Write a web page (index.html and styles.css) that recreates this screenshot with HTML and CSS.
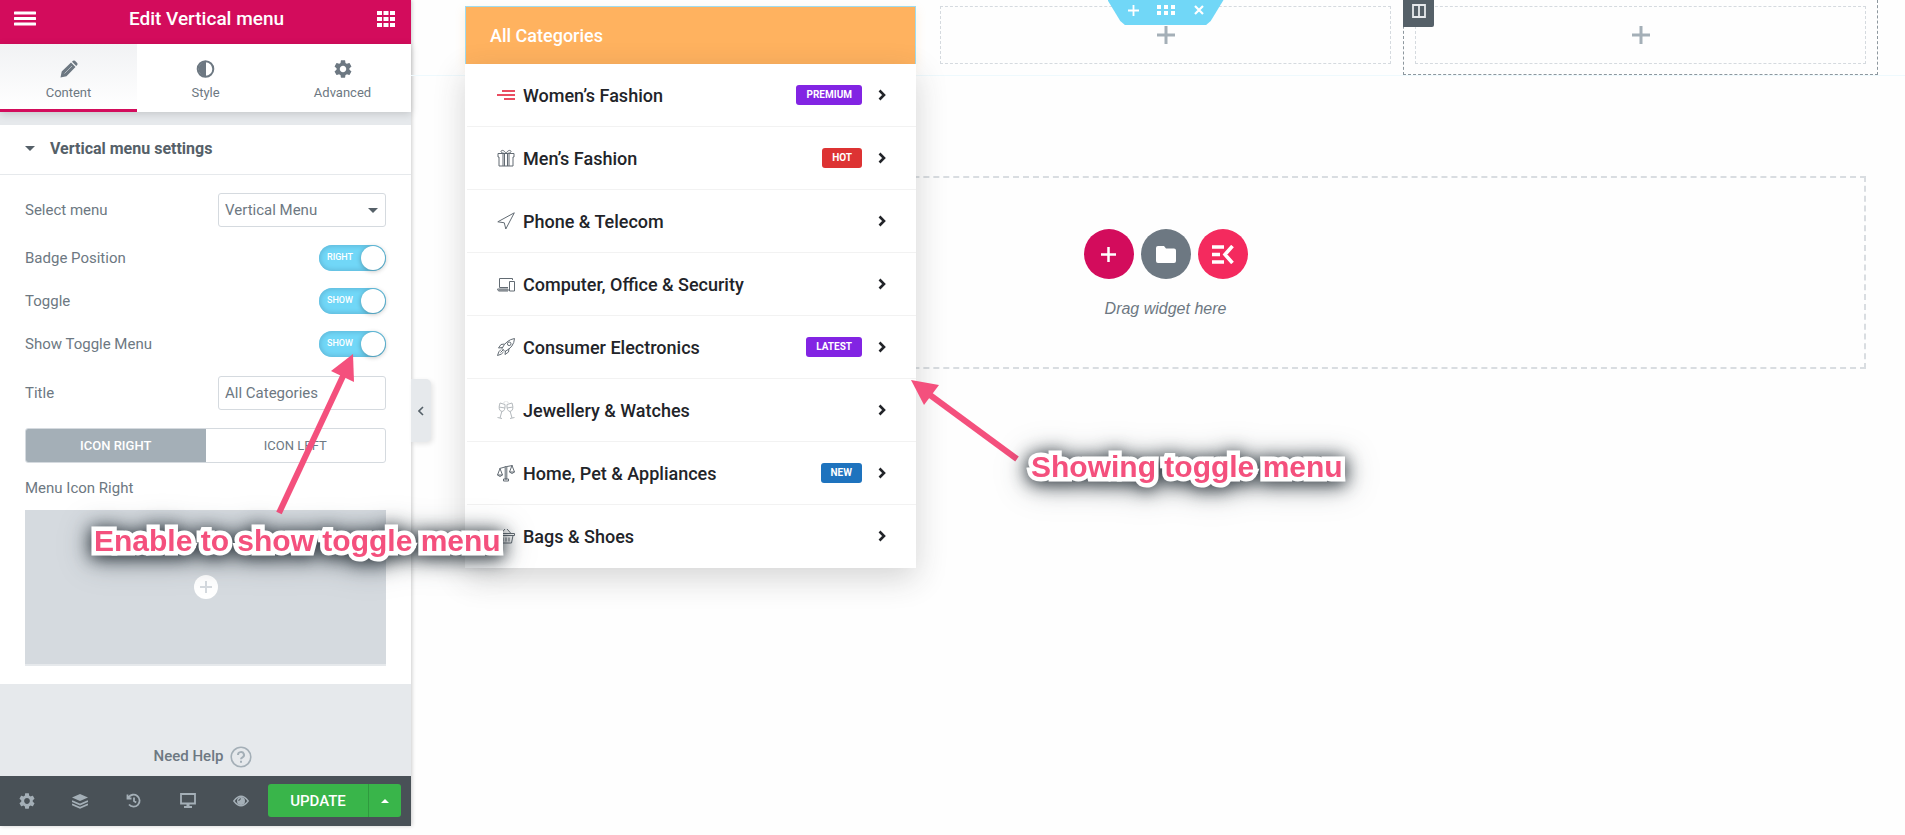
FILE: index.html
```html
<!DOCTYPE html>
<html lang="en">
<head>
    <meta charset="UTF-8">
    <meta name="viewport" content="width=device-width, initial-scale=1.0">
    <title>Edit Vertical menu</title>
    <link rel="stylesheet" href="styles.css">
</head>
<body>

<svg class="sprite" aria-hidden="true">
    <symbol id="gear" viewBox="0 0 24 24">
        <path fill-rule="evenodd" d="M19.14,12.94c0.04-0.3,0.06-0.61,0.06-0.94c0-0.32-0.02-0.64-0.07-0.94l2.03-1.58c0.18-0.14,0.23-0.41,0.12-0.61l-1.92-3.32c-0.12-0.22-0.37-0.29-0.59-0.22l-2.39,0.96c-0.5-0.38-1.03-0.7-1.62-0.94L14.4,2.81c-0.04-0.24-0.24-0.41-0.48-0.41h-3.84c-0.24,0-0.43,0.17-0.47,0.41L9.25,5.35C8.66,5.59,8.12,5.92,7.63,6.29L5.24,5.33c-0.22-0.08-0.47,0-0.59,0.22L2.74,8.87C2.62,9.08,2.66,9.34,2.86,9.48l2.03,1.58C4.84,11.36,4.8,11.69,4.8,12s0.02,0.64,0.07,0.94l-2.03,1.58c-0.18,0.14-0.23,0.41-0.12,0.61l1.92,3.32c0.12,0.22,0.37,0.29,0.59,0.22l2.39-0.96c0.5,0.38,1.03,0.7,1.62,0.94l0.36,2.54c0.05,0.24,0.24,0.41,0.48,0.41h3.84c0.24,0,0.44-0.17,0.47-0.41l0.36-2.54c0.59-0.24,1.13-0.56,1.62-0.94l2.39,0.96c0.22,0.08,0.47,0,0.59-0.22l1.92-3.32c0.12-0.22,0.07-0.47-0.12-0.61L19.14,12.94z M12,15.6c-1.98,0-3.6-1.62-3.6-3.6s1.62-3.6,3.6-3.6s3.6,1.62,3.6,3.6S13.98,15.6,12,15.6z"/>
    </symbol>
    <symbol id="chevron" viewBox="0 0 8 12">
        <path d="M1.5 1.5L6 6l-4.500 4.500" fill="none" stroke="currentColor" stroke-width="2.600"/>
    </symbol>
    <symbol id="plus" viewBox="0 0 18 18">
        <path d="M9 0v18M0 9h18" fill="none" stroke="currentColor" stroke-width="3"/>
    </symbol>
</svg>

<aside class="panel">
    <header class="panel-header">
        <button aria-label="Menu"><svg width="22" height="15" viewBox="0 0 22 15"><path d="M1 2h20M1 7.500h20M1 13h20" stroke="#fff" stroke-width="3" stroke-linecap="round"/></svg></button>
        <h1>Edit Vertical menu</h1>
        <button aria-label="Widgets"><svg width="18" height="16" viewBox="0 0 18 16" fill="#fff"><path d="M0 0h5v4H0zM6.500 0h5v4h-5zM13 0h5v4h-5zM0 6h5v4H0zM6.500 6h5v4h-5zM13 6h5v4h-5zM0 12h5v4H0zM6.500 12h5v4h-5zM13 12h5v4h-5z"/></svg></button>
    </header>

    <nav class="tabs">
        <a href="#content" class="active">
            <svg width="18" height="18" viewBox="0 0 18 18" fill="currentColor"><path d="M.5 17.500l1.200-6L11 2.500l4.500 4.500L6.500 16.300zM12 1.800l1-1q1-.8 2 0l2.200 2.200q.8 1 0 2l-1 1z"/><path d="M4.500 13.500L12 6" stroke="#c5cacf" stroke-width=".8"/></svg>
            Content
        </a>
        <a href="#style">
            <svg width="19" height="18" viewBox="0 0 19 18"><circle cx="9.500" cy="9" r="7.800" fill="none" stroke="currentColor" stroke-width="2"/><path d="M10 1.500v15a7.500 7.500 0 0 1 0-15z" fill="currentColor"/></svg>
            Style
        </a>
        <a href="#advanced">
            <svg width="20" height="18" viewBox="2 2 20 20" fill="currentColor"><use href="#gear" width="24" height="24"/></svg>
            Advanced
        </a>
    </nav>

    <section class="settings">
        <h2><span class="caret"></span>Vertical menu settings</h2>
        <div class="controls">
            <div class="control">
                <label for="menu">Select menu</label>
                <div class="select-wrap">
                    <select id="menu"><option>Vertical Menu</option></select>
                    <span class="caret"></span>
                </div>
            </div>
            <div class="control toggle">
                <label for="badge-position">Badge Position</label>
                <div class="switch"><input type="checkbox" id="badge-position" checked><span>RIGHT</span></div>
            </div>
            <div class="control toggle">
                <label for="toggle">Toggle</label>
                <div class="switch"><input type="checkbox" id="toggle" checked><span>SHOW</span></div>
            </div>
            <div class="control toggle">
                <label for="show-toggle">Show Toggle Menu</label>
                <div class="switch"><input type="checkbox" id="show-toggle" checked><span>SHOW</span></div>
            </div>
            <div class="control">
                <label for="title">Title</label>
                <input type="text" id="title" value="All Categories">
            </div>
            <div class="choices">
                <button class="active">ICON RIGHT</button>
                <button>ICON LEFT</button>
            </div>
            <div class="media-label">Menu Icon Right</div>
            <button class="media" aria-label="Choose icon">
                <svg width="24" height="24" viewBox="0 0 24 24"><circle cx="12" cy="12" r="12" fill="#fff"/><path d="M12 6v12M6 12h12" stroke="#d5dadf" stroke-width="2"/></svg>
            </button>
        </div>
    </section>

    <a href="#help" class="help">Need Help
        <svg width="22" height="22" viewBox="0 0 22 22" fill="none" stroke="#a4afb7"><circle cx="11" cy="11" r="9.800" stroke-width="1.600"/><path d="M8 9a3 2.800 0 1 1 4.500 2.300Q11 12.200 11 13.300M11 14.800v2" stroke-width="2"/></svg>
    </a>

    <footer class="panel-footer">
        <button class="tool" aria-label="Settings"><svg width="16" height="16" viewBox="2 2 20 20" fill="currentColor"><use href="#gear" width="24" height="24"/></svg></button>
        <button class="tool" aria-label="Navigator"><svg width="16" height="16" viewBox="0 0 16 16" fill="currentColor"><path d="M8 1l8 3.500L8 8 0 4.500z"/><path d="M0 8l8 3.500L16 8M0 11.300l8 3.500 8-3.500" fill="none" stroke="currentColor" stroke-width="1.700"/></svg></button>
        <button class="tool" aria-label="History"><svg width="15" height="15" viewBox="0 0 15 15" fill="none" stroke="currentColor" stroke-width="1.800"><path d="M2.500 4.500A6 6 0 1 1 3 11.500M1.500 1.500v4h4M8 4.500v3.500l2.200 1.500"/></svg></button>
        <button class="tool" aria-label="Responsive mode"><svg width="16" height="15" viewBox="0 0 16 15"><path d="M1 1h14v9.500H1z" fill="none" stroke="currentColor" stroke-width="1.800"/><path d="M6.500 11h3v2H12v2H4v-2h2.500z" fill="currentColor"/></svg></button>
        <button class="tool" aria-label="Preview"><svg width="16" height="12" viewBox="0 0 16 12"><path d="M.8 6Q8-3.500 15.200 6 8 15.500.8 6z" fill="none" stroke="currentColor" stroke-width="1.400"/><circle cx="8" cy="6" r="4" fill="currentColor"/><path d="M5.800 6A2.200 2.200 0 0 1 8 3.800" fill="none" stroke="#495157"/></svg></button>
        <button class="update">UPDATE</button>
        <button class="update-more" aria-label="Save options"><span class="caret up"></span></button>
    </footer>

    <button class="collapse" aria-label="Hide panel"><svg width="6" height="10" viewBox="0 0 6 10"><path d="M5 1L1 5l4 4" fill="none" stroke="#556068" stroke-width="1.600"/></svg></button>
</aside>

<main class="canvas">
    <div class="section">
        <div class="section-tools">
            <button aria-label="Add section"><svg width="11" height="11"><use href="#plus"/></svg></button>
            <button aria-label="Edit section"><svg width="18" height="10" viewBox="0 0 18 10" fill="#fff"><path d="M0 0h4v4H0zM7 0h4v4H7zM14 0h4v4h-4zM0 6h4v4H0zM7 6h4v4H7zM14 6h4v4h-4z"/></svg></button>
            <button aria-label="Delete section"><svg width="10" height="10" viewBox="0 0 10 10"><path d="M1 1l8 8M9 1L1 9" stroke="#fff" stroke-width="2.200"/></svg></button>
        </div>

        <div class="column">
            <div class="menu">
                <button class="menu-title">All Categories</button>
                <ul class="menu-list">
                    <li><a href="#">
                        <svg class="icon" viewBox="0 0 18 18"><path d="M5 5h13M0 9h18M7 13h11" stroke="#ea4d61" stroke-width="1.800"/></svg>
                        <span class="name">Women’s Fashion</span><span class="badge purple">PREMIUM</span>
                        <svg class="arrow"><use href="#chevron"/></svg>
                    </a></li>
                    <li><a href="#">
                        <svg class="icon" viewBox="0 0 18 18"><path d="M1 4.500h16V8h-1v9H2V8H1zM6 5v12M7.500 5v12M10.500 5v12M12 5v12M9 4.500C7 4.500 4 4 4 2.500S7 .5 9 4.500c2-4 5-3.500 5-2S11 4.500 9 4.500"/></svg>
                        <span class="name">Men’s Fashion</span><span class="badge red">HOT</span>
                        <svg class="arrow"><use href="#chevron"/></svg>
                    </a></li>
                    <li><a href="#">
                        <svg class="icon" viewBox="0 0 18 18"><path d="M17.300.8L.8 9.800l6.500 1L8.800 17z"/></svg>
                        <span class="name">Phone &amp; Telecom</span>
                        <svg class="arrow"><use href="#chevron"/></svg>
                    </a></li>
                    <li><a href="#">
                        <svg class="icon" viewBox="0 0 18 18"><path d="M2.500 12.500V3.500h13V5M2.500 12.500H11M.5 14H11v2H1.500zM12.500 6.500h5v9.500h-5zM2 15h8"/></svg>
                        <span class="name">Computer, Office &amp; Security</span>
                        <svg class="arrow"><use href="#chevron"/></svg>
                    </a></li>
                    <li><a href="#">
                        <svg class="icon" viewBox="0 0 18 18"><path d="M5 10.500Q9 2 17.500.5 17 9 8 13.500zM7.500 6L4 6.500 1.500 10l4-.5M12 10.500l-.5 3.500L8 16.500l.5-3.500M4 11.500Q1.500 13 .5 17.500 5 16.500 6.500 14M3.500 14.500l3-3"/><circle cx="12.200" cy="5.800" r="1.800"/></svg>
                        <span class="name">Consumer Electronics</span><span class="badge purple">LATEST</span>
                        <svg class="arrow"><use href="#chevron"/></svg>
                    </a></li>
                    <li><a href="#">
                        <svg class="icon light" viewBox="0 0 18 18"><path d="M3 2l5 1.500q.5 6.500-3 7Q.5 9.500 3 2zM15 2l-5 1.500q-.5 6.500 3 7Q17.500 9.500 15 2zM4.800 10.500L3 17M.5 16.500l4.500 1M13.200 10.500L15 17M17.500 16.500l-4.500 1M2 6l6 1M16 6l-6 1M7 1.500l1-1M11 1.500l-1-1"/></svg>
                        <span class="name">Jewellery &amp; Watches</span>
                        <svg class="arrow"><use href="#chevron"/></svg>
                    </a></li>
                    <li><a href="#">
                        <svg class="icon" viewBox="0 0 18 18"><path d="M8.200 2.500h1.600V15H8.200zM6.500 15h5v2h-5zM2.500 4.500L8 3M10 2.500l5.500-1M3 4.500L.5 11h5zM15 1.500L12.500 8h5zM.5 11q2.500 3 5 0M12.500 8q2.500 3 5 0"/></svg>
                        <span class="name">Home, Pet &amp; Appliances</span><span class="badge blue">NEW</span>
                        <svg class="arrow"><use href="#chevron"/></svg>
                    </a></li>
                    <li><a href="#">
                        <svg class="icon" viewBox="0 0 18 18"><path d="M.5 6.500h17v2H.5zM2 8.500h14L14.500 16h-11zM4 6.500L8 2M14 6.500L10 2M6 10.500v4M9 10.500v4M12 10.500v4"/></svg>
                        <span class="name">Bags &amp; Shoes</span>
                        <svg class="arrow"><use href="#chevron"/></svg>
                    </a></li>
                </ul>
            </div>
        </div>
        <div class="column">
            <button class="empty" aria-label="Add widget"><svg width="18" height="18"><use href="#plus"/></svg></button>
        </div>
        <div class="column selected">
            <button class="column-handle" aria-label="Edit column"><svg width="14" height="14" viewBox="0 0 14 14"><path d="M1 1h12v12H1zM7 1v12" fill="none" stroke="#e6e9ec" stroke-width="1.800"/></svg></button>
            <button class="empty" aria-label="Add widget"><svg width="18" height="18"><use href="#plus"/></svg></button>
        </div>
    </div>

    <div class="drop-area">
        <div class="drop-buttons">
            <button class="add" aria-label="Add new section"><svg width="15" height="15"><use href="#plus"/></svg></button>
            <button class="folder" aria-label="Add template"><svg width="20" height="17" viewBox="0 0 20 17"><path d="M2 0h6l2 2.500h8q2 0 2 2V15q0 2-2 2H2q-2 0-2-2V2q0-2 2-2z" fill="#fff"/></svg></button>
            <button class="kit" aria-label="ElementsKit"><svg width="22" height="19" viewBox="0 0 22 19"><path d="M0 2h12M0 9.500h8M0 17h12M20.500 1L13 9.500l7.500 8.500" fill="none" stroke="#fff" stroke-width="3.600"/></svg></button>
        </div>
        <p>Drag widget here</p>
    </div>
</main>

<svg class="arrows" width="1030" height="520" viewBox="0 0 1030 520" fill="#f4507d" stroke="#f4507d" aria-hidden="true">
    <path d="M279 513L344 374" stroke-width="6"/>
    <path d="M353 354l1 28-23-11z" stroke="none"/>
    <path d="M1017 459L930 395" stroke-width="6"/>
    <path d="M911 380l28 5-15 20z" stroke="none"/>
</svg>
<div class="note note-enable">Enable to show toggle menu</div>
<div class="note note-showing">Showing toggle menu</div>

</body>
</html>
```
FILE: styles.css
```css
* {
    box-sizing: border-box;
}
body {
    font-family: Roboto, sans-serif;
    margin: 0;
    padding-bottom: 9px;
    min-height: 100vh;
    display: flex;
    position: relative;
    background-color: #fefefe;
    color: #6d7882;
    overflow-x: hidden;
}
button {
    font-family: inherit;
    color: inherit;
    padding: 0;
    border: none;
    background: none;
    cursor: pointer;
    display: flex;
    align-items: center;
    justify-content: center;
}
a {
    color: inherit;
    text-decoration: none;
}
svg {
    display: block;
    flex: none;
}
.sprite {
    position: absolute;
    width: 0;
    height: 0;
}

/* Left panel */
.panel {
    width: 411px;
    flex: none;
    position: relative;
    display: flex;
    flex-direction: column;
    background-color: #e6e9ec;
    box-shadow: 1px 0 4px rgba(0, 0, 0, 0.2);
}
.panel-header {
    height: 44px;
    padding: 0 16px 7px 14px;
    display: flex;
    align-items: center;
    justify-content: space-between;
    background-color: #d30c5c;
}
.panel-header h1 {
    margin: 0;
    font-size: 19px;
    line-height: 22px;
    font-weight: 500;
    color: #fff;
}
.tabs {
    display: flex;
    height: 68px;
    background-color: #fff;
    box-shadow: 0 2px 8px rgba(0, 0, 0, 0.15);
}
.tabs a {
    flex: 1;
    display: flex;
    flex-direction: column;
    align-items: center;
    gap: 6px;
    padding-top: 16px;
    font-size: 13px;
    line-height: 18px;
    border-bottom: 3px solid transparent;
}
.tabs a.active {
    background: linear-gradient(#f1f2f4, #fff);
    border-bottom-color: #d30c5c;
}
.settings {
    margin-top: 13px;
    background-color: #fff;
}
.settings h2 {
    margin: 0;
    height: 50px;
    padding: 0 25px 2px;
    display: flex;
    align-items: center;
    gap: 15px;
    font-size: 16px;
    font-weight: 700;
    color: #556068;
    border-bottom: 1px solid #e6e9ec;
}
.caret {
    border: 5px solid transparent;
    border-top-color: #556068;
    border-bottom: none;
}
.caret.up {
    border: 4px solid transparent;
    border-bottom-color: #fff;
    border-top: none;
}
.controls {
    padding: 17px 25px 18px;
    font-size: 15px;
}
.control {
    display: flex;
    align-items: center;
    justify-content: space-between;
    height: 35px;
    margin-bottom: 18px;
}
.control.toggle {
    height: 26px;
}
.control.toggle + .control.toggle {
    margin-top: -1px;
}
.control select,
.control input[type="text"] {
    width: 168px;
    height: 34px;
    padding: 0 6px;
    border: 1px solid #d5dadf;
    border-radius: 3px;
    background-color: #fff;
    font: inherit;
    color: inherit;
    appearance: none;
}
.select-wrap,
.switch {
    position: relative;
}
.select-wrap .caret {
    position: absolute;
    right: 8px;
    top: 15px;
}
.switch input {
    display: block;
    width: 67px;
    height: 26px;
    margin: 0;
    appearance: none;
    border-radius: 13px;
    background-color: #71d7f7;
    box-shadow: inset 0 0 5px 1px #5fb5d6;
}
.switch input::before {
    content: "";
    display: block;
    width: 24px;
    height: 24px;
    margin: 1px 1px 1px 42px;
    border-radius: 50%;
    background-color: #fff;
    box-shadow: 0 1px 5px rgba(0, 0, 0, 0.3);
}
.switch span {
    position: absolute;
    left: 8px;
    top: 6px;
    font-size: 9px;
    line-height: 12px;
    font-weight: 500;
    color: #fff;
    pointer-events: none;
}
.choices {
    display: flex;
    height: 35px;
    border: 1px solid #d5dadf;
    border-radius: 3px;
    overflow: hidden;
}
.choices button {
    flex: 1;
    font-size: 13px;
}
.choices .active {
    background-color: #a4afb7;
    color: #fff;
    font-weight: 500;
}
.media-label {
    margin: 16px 0 12px;
    line-height: 19px;
}
.media {
    width: 100%;
    height: 156px;
    background-color: #d5dadf;
    border-bottom: 2px solid #e6e9ec;
}
.help {
    margin-top: auto;
    height: 30px;
    padding-right: 5px;
    display: flex;
    justify-content: center;
    gap: 7px;
    font-size: 15px;
    line-height: 20px;
    font-weight: 500;
}
.panel-footer {
    height: 50px;
    padding: 0 10px 1px 0;
    display: flex;
    align-items: center;
    background-color: #495157;
}
.panel-footer .tool {
    flex: 1;
    height: 48px;
    color: #a4afb7;
}
.update,
.update-more {
    height: 33px;
    background-color: #39b54a;
    color: #fff;
    font-size: 15px;
    font-weight: 500;
}
.update {
    width: 101px;
    border-radius: 3px 0 0 3px;
    border-right: 1px solid #2f9a3e;
}
.update-more {
    width: 32px;
    border-radius: 0 3px 3px 0;
}
.collapse {
    position: absolute;
    left: 100%;
    top: 379px;
    width: 20px;
    height: 63px;
    background-color: #e6e9ec;
    border-radius: 0 5px 5px 0;
    box-shadow: 2px 2px 5px rgba(0, 0, 0, 0.1);
}

/* Page canvas */
.canvas {
    flex: 1;
    min-width: 0;
}
.section {
    position: relative;
    display: flex;
    height: 76px;
    padding: 0 27px 0 42px;
    border-bottom: 1px solid #eef9fd;
}
.section-tools {
    position: absolute;
    z-index: 1;
    top: 0;
    left: 42px;
    right: 27px;
    width: 116px;
    height: 25px;
    margin: 0 auto;
    padding: 0 20px 5px;
    display: flex;
    align-items: center;
    justify-content: space-between;
    background-color: #71d7f7;
    clip-path: polygon(0 0, 100% 0, 89% 84%, 85% 100%, 15% 100%, 11% 84%);
    color: #fff;
}
.column {
    flex: 1;
    min-width: 0;
    position: relative;
    padding: 6px 12px 12px;
}
.column.selected {
    border: 1px dashed #8d979e;
    border-top: none;
    padding: 6px 11px 11px;
}
.column-handle {
    position: absolute;
    top: 0;
    left: -1px;
    width: 31px;
    height: 27px;
    padding-bottom: 6px;
    border-radius: 0 0 2px 0;
    background-color: #556068;
}
.empty {
    width: 100%;
    height: 58px;
    border: 1px dashed #d5dadf;
    color: #a4afb7;
}
.drop-area {
    margin: 100px 39px 0 54px;
    height: 193px;
    display: flex;
    flex-direction: column;
    align-items: center;
    border: 2px dashed #d9dde1;
}
.drop-buttons {
    display: flex;
    gap: 7px;
    margin-top: 51px;
}
.drop-buttons button {
    width: 50px;
    height: 50px;
    border-radius: 50%;
    color: #fff;
}
.drop-buttons .add {
    background-color: #d30c5c;
}
.drop-buttons .folder {
    background-color: #6d7882;
}
.drop-buttons .kit {
    background-color: #f42a5e;
}
.drop-area p {
    margin: 20px 0 0;
    font-family: "Liberation Sans", Arial, sans-serif;
    font-size: 16px;
    line-height: 20px;
    font-style: italic;
}

/* Vertical menu widget */
.menu {
    position: relative;
    z-index: 1;
}
.menu-title {
    width: 100%;
    height: 58px;
    padding: 0 24px;
    justify-content: flex-start;
    border: 1px solid #9fdcee;
    border-bottom: none;
    background-color: #ffb25f;
    box-shadow: 0 4px 10px rgba(255, 178, 95, 0.2);
    color: #fff;
    font-size: 18px;
    font-weight: 500;
}
.menu-list {
    position: absolute;
    top: 100%;
    left: 0;
    right: 0;
    margin: 0;
    padding: 0 0 0 2px;
    list-style: none;
    color: #222429;
    background-color: #fff;
    box-shadow: 0 10px 30px rgba(45, 45, 45, 0.2);
}
.menu-list li {
    height: 63px;
    border-bottom: 1px solid #f2f2f2;
}
.menu-list li:last-child {
    border-bottom: none;
}
.menu-list a {
    height: 62px;
    padding: 0 30px;
    display: flex;
    align-items: center;
}
.menu-list .icon {
    width: 18px;
    height: 18px;
    margin-right: 8px;
    fill: none;
    stroke: #626b73;
}
.menu-list .icon.light {
    stroke: #b4b9bd;
}
.menu-list .name {
    font-size: 18px;
    font-weight: 500;
}
.menu-list .arrow {
    width: 8px;
    height: 12px;
    margin-left: auto;
}
.badge {
    margin-left: auto;
    padding: 0 10px;
    border-radius: 3px;
    color: #fff;
    font-size: 10px;
    line-height: 20px;
    font-weight: 700;
}
.menu-list .badge + .arrow {
    margin-left: 16px;
}
.purple {
    background-color: #8224e3;
}
.red {
    background-color: #dd3333;
}
.blue {
    background-color: #1e73be;
}

/* Callouts drawn over the page */
.arrows {
    position: absolute;
    top: 0;
    left: 0;
    z-index: 2;
    pointer-events: none;
}
.note {
    position: absolute;
    z-index: 3;
    font-family: "Liberation Sans", Arial, sans-serif;
    font-size: 30px;
    line-height: 36px;
    font-weight: 700;
    white-space: nowrap;
    color: #f4507d;
    -webkit-text-stroke: 9px #fff;
    stroke-linejoin: round;
    paint-order: stroke fill;
    filter: drop-shadow(0 2px 8px rgba(30, 40, 48, 0.8)) drop-shadow(0 2px 12px rgba(30, 40, 48, 0.5));
}
.note-enable {
    left: 94px;
    top: 523px;
}
.note-showing {
    left: 1031px;
    top: 449px;
}
```
